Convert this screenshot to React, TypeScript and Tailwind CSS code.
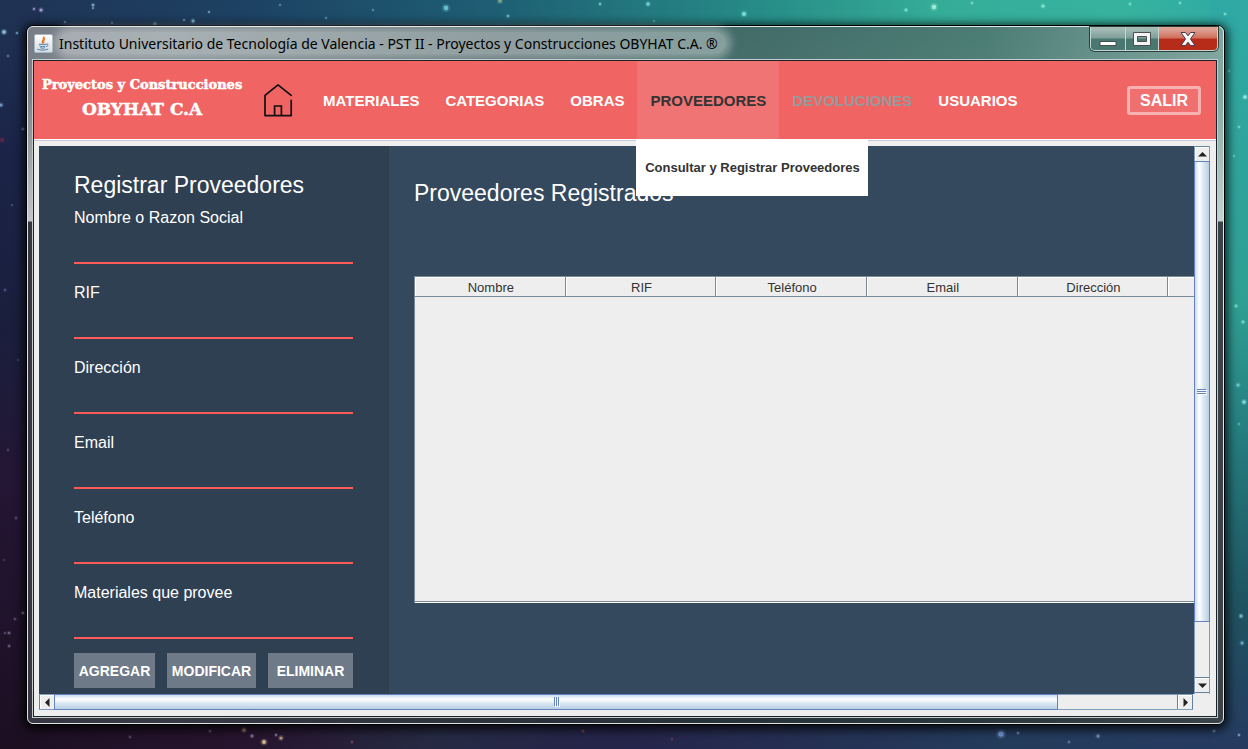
import type { ReactNode } from "react";

const NAV = [
  { label: "MATERIALES", state: "normal" },
  { label: "CATEGORIAS", state: "normal" },
  { label: "OBRAS", state: "normal" },
  { label: "PROVEEDORES", state: "active" },
  { label: "DEVOLUCIONES", state: "disabled" },
  { label: "USUARIOS", state: "normal" },
];

const FIELDS = [
  { id: "nombre", label: "Nombre o Razon Social" },
  { id: "rif", label: "RIF" },
  { id: "direccion", label: "Dirección" },
  { id: "email", label: "Email" },
  { id: "telefono", label: "Teléfono" },
  { id: "materiales", label: "Materiales que provee" },
];

const COLUMNS = ["Nombre", "RIF", "Teléfono", "Email", "Dirección", ""];

const STARS: [number, number, number, string][] = [
  [4, 32, 1.8, "#9fd6f5"], [17, 33, 1.1, "#7db2d8"], [34, 9, 1.2, "#8f8fc4"], [41, 10, 1.5, "#b6a6e0"],
  [93, 5, 1.3, "#8ab0c8"], [93, 8, 1, "#7fa0bb"], [65, 22, 1, "#6d93b0"], [112, 23, 1, "#5f88a5"],
  [155, 24, 1.5, "#6fa9bd"], [193, 21, 1.5, "#8ed0ea"], [184, 20, 1, "#6ea6bd"], [209, 12, 1, "#7bb0c8"],
  [280, 5, 1, "#5d93a8"], [326, 18, 1, "#62a0ae"], [373, 10, 1, "#5c9fae"], [446, 8, 2.4, "#6cc9d2"],
  [500, 1, 1.8, "#8fae88"], [508, 16, 1.3, "#6fc3cc"], [600, 4, 1.2, "#6fd0cf"], [648, 4, 1.6, "#7fe6e2"],
  [744, 14, 1.9, "#83f0e6"], [654, 21, 1, "#5fbfb6"], [906, 10, 1.4, "#7fe8d2"], [934, 7, 2.2, "#a8f4e0"],
  [972, 3, 1.2, "#7fdcc6"], [1043, 6, 1.5, "#8cf0d8"], [1130, 4, 1.2, "#7fe0cb"], [1180, 3, 1.2, "#7fe0cb"],
  [1225, 14, 1.2, "#7fe0cb"], [1229, 71, 1.2, "#6fd8c4"], [1245, 97, 1.7, "#9ff2ea"], [1239, 127, 1.2, "#6fd8c4"],
  [1234, 156, 1.1, "#6fd8c4"], [1236, 306, 1.4, "#7fdccf"], [1243, 322, 1.4, "#7fdccf"], [1238, 385, 1.6, "#79cfd4"],
  [1244, 402, 1.7, "#8fe6ee"], [1239, 424, 1.1, "#60b8bc"], [1241, 616, 1.5, "#7cc7da"], [1242, 643, 1.5, "#6fb4c9"],
  [1239, 735, 1.2, "#7b9bc0"], [1214, 731, 1.2, "#6f90b8"], [1098, 736, 1.5, "#7d9dd2"], [1001, 734, 2.8, "#7ba0e0"],
  [1018, 733, 1.2, "#6f86b8"], [1069, 742, 1.2, "#6279a8"], [583, 731, 1.3, "#6d4f58"], [672, 739, 1.2, "#5b3a55"],
  [264, 742, 2, "#e6c79a"], [281, 738, 1.6, "#cfa983"], [244, 730, 1.7, "#a88a6c"], [252, 736, 1.4, "#7f80a8"],
  [276, 735, 1.2, "#7f80a8"], [210, 731, 1.3, "#5d5572"], [130, 737, 1.2, "#51486a"], [352, 742, 1.2, "#7a4256"],
  [9, 633, 1.3, "#6f6485"], [15, 619, 1.2, "#595070"], [5, 633, 1.1, "#595070"], [9, 646, 1.2, "#6c6280"],
  [23, 613, 1.3, "#7b7892"], [8, 56, 1.2, "#50709a"], [1, 105, 1.5, "#7fa5d0"], [23, 129, 1.3, "#5f78a0"],
  [2, 140, 2, "#5d2945"], [12, 205, 1, "#46577f"], [5, 290, 1.2, "#4a5688"], [18, 360, 1, "#48436a"],
  [8, 450, 1.2, "#4d4066"], [16, 518, 1.3, "#5f4770"], [4, 560, 1.1, "#4d3c5c"],
];

function Backdrop() {
  return (
    <svg
      className="absolute inset-0 size-full"
      viewBox="0 0 1248 749"
      preserveAspectRatio="none"
      aria-hidden="true"
    >
      <defs>
        <linearGradient id="top" x1="0" x2="1" y1="0" y2="0">
          <stop offset="0" stopColor="#1f3355" />
          <stop offset="0.2" stopColor="#1d4263" />
          <stop offset="0.4" stopColor="#1e5f74" />
          <stop offset="0.6" stopColor="#268a86" />
          <stop offset="0.75" stopColor="#35ac98" />
          <stop offset="0.9" stopColor="#36b39f" />
          <stop offset="1" stopColor="#2fa9a4" />
        </linearGradient>
        <linearGradient id="bottom" x1="0" x2="1" y1="0" y2="0">
          <stop offset="0" stopColor="#1c0f22" />
          <stop offset="0.2" stopColor="#27142e" />
          <stop offset="0.35" stopColor="#252a43" />
          <stop offset="0.5" stopColor="#25244a" />
          <stop offset="0.8" stopColor="#243c5c" />
          <stop offset="1" stopColor="#263a60" />
        </linearGradient>
        <linearGradient id="left" x1="0" x2="0" y1="0" y2="1">
          <stop offset="0" stopColor="#1f3355" />
          <stop offset="0.2" stopColor="#1b2448" />
          <stop offset="0.45" stopColor="#1a1e3c" />
          <stop offset="0.65" stopColor="#241634" />
          <stop offset="1" stopColor="#1c0f22" />
        </linearGradient>
        <linearGradient id="right" x1="0" x2="0" y1="0" y2="1">
          <stop offset="0" stopColor="#2fa9a4" />
          <stop offset="0.4" stopColor="#2f9f93" />
          <stop offset="0.6" stopColor="#24797c" />
          <stop offset="0.8" stopColor="#1f5460" />
          <stop offset="1" stopColor="#263a60" />
        </linearGradient>
      </defs>
      <rect width="1248" height="400" fill="url(#top)" />
      <rect y="400" width="1248" height="349" fill="url(#bottom)" />
      <rect width="40" height="749" fill="url(#left)" />
      <rect x="1210" width="38" height="749" fill="url(#right)" />
      {STARS.map(([x, y, r, fill]) => (
        <g key={`${x}-${y}`} fill={fill}>
          <circle cx={x} cy={y} r={r * 1.8} opacity="0.22" />
          <circle cx={x} cy={y} r={r} opacity="0.85" />
        </g>
      ))}
    </svg>
  );
}

function JavaIcon() {
  return (
    <svg className="size-[19px] shrink-0" viewBox="0 0 19 19" aria-hidden="true">
      <defs>
        <linearGradient id="tile" x1="0" x2="0" y1="0" y2="1">
          <stop offset="0" stopColor="#ffffff" />
          <stop offset="1" stopColor="#d3dbe2" />
        </linearGradient>
      </defs>
      <rect x="0.5" y="0.5" width="18" height="18" rx="1.5" fill="url(#tile)" stroke="#a9b5bf" />
      <path d="M9.2 9.400c-3-2.300 1.600-3.400.2-6.600 3.200 2.600-1.600 4 .8 6" fill="none" stroke="#e8792b" strokeWidth="1.300" />
      <path d="M4.800 10.300h7.400M5.400 12c1.500.7 4.500.7 6 0M6.200 13.700c1.500.6 3.500.6 4.800 0M12.200 10.100c2.600-.5 2.400 2.200-.2 2.500M3.400 15.200c2.500 1.300 8.500 1.200 10.800-.2" fill="none" stroke="#4f7fa6" strokeWidth="1" />
    </svg>
  );
}

function HomeIcon() {
  return (
    <svg className="h-[34px] w-[30px]" viewBox="0 0 30 34" fill="none" stroke="#111" strokeWidth="1.7" aria-hidden="true">
      <path d="M28.200 12.300 15 1.900 2 12.300V32.600H28.200V17.300" strokeLinejoin="round" strokeLinecap="round" />
      <path d="M11.600 32.600V23H18.400V32.600" />
    </svg>
  );
}

function WindowControls() {
  return (
    <div className="mr-[5px] flex h-6 overflow-hidden rounded-b-[5px] border border-t-0 border-[#c3d6d1] shadow-[0_0_0_1px_#2b3f3d]">
      <button type="button" aria-label="Minimizar" className="flex w-[35px] items-center justify-center border-r border-[#c3d6d1] bg-linear-to-b from-[#a3bab5] from-10% via-[#7f9f99] via-48% to-[#4a7770] to-52%">
        <svg width="18" height="16" viewBox="0 0 18 16" aria-hidden="true">
          <rect x="1" y="10.500" width="16" height="4" fill="#fff" stroke="#46504f" />
        </svg>
      </button>
      <button type="button" aria-label="Maximizar" className="flex w-[33px] items-center justify-center border-r border-[#c3d6d1] bg-linear-to-b from-[#a3bab5] from-10% via-[#7f9f99] via-48% to-[#4a7770] to-52%">
        <svg width="18" height="16" viewBox="0 0 18 16" aria-hidden="true">
          <path d="M.5 1.500h17v13H.5zM4.500 5.500v5h9v-5z" fill="#f4f4f4" fillRule="evenodd" stroke="#46504f" />
        </svg>
      </button>
      <button type="button" aria-label="Cerrar" className="flex w-[58px] items-center justify-center bg-linear-to-b from-[#dda294] from-10% via-[#cf6e5c] via-48% to-[#b62c18] to-52%">
        <svg width="16" height="14" viewBox="0 0 16 14" aria-hidden="true">
          <path d="M1 .5h4.500L8 3.800 10.500.5H15L10.500 7 15 13.500h-4.500L8 10.200 5.500 13.500H1L5.500 7z" fill="#f6f6f6" stroke="#4a3a4a" />
        </svg>
      </button>
    </div>
  );
}

function Arrow({ d }: { d: string }) {
  return (
    <svg width="9" height="9" viewBox="0 0 9 9" aria-hidden="true">
      <path d={d} fill="#222" />
    </svg>
  );
}

function ArrowButton({ label, className, children }: { label: string; className: string; children: ReactNode }) {
  return (
    <button
      type="button"
      aria-label={label}
      className={`flex shrink-0 items-center justify-center border-[#6382a0] bg-[#eeeeee] shadow-[inset_1px_1px_0_#fff] ${className}`}
    >
      {children}
    </button>
  );
}

export default function App() {
  return (
    <div className="relative flex h-screen min-h-[600px] bg-[#1b2a45] pt-[25px] pr-[23px] pb-6 pl-[26px] font-['Liberation_Sans',Arial,sans-serif]">
      <Backdrop />
      <div className="relative flex min-w-0 flex-1 flex-col rounded-[7px] border border-black shadow-[0_2px_10px_3px_rgba(0,0,0,0.75)]">
        <div className="flex min-h-0 flex-1 flex-col rounded-[6px] border border-[#dfe4e4] bg-[linear-gradient(180deg,rgba(130,145,150,0)_0,rgba(225,228,232,0.05)_70px,rgba(225,228,232,0.7)_194px,rgba(28,26,38,0.7)_195px),linear-gradient(90deg,#777d86_0,#77858a_12%,#53696c_40%,#426b68_60%,#4b7c74_80%,#7fa69f_100%)] pr-[5px] pl-1">
          <header className="-mr-[5px] -ml-1 flex h-8 shrink-0 items-start justify-between pl-[6px]">
            <div className="flex h-8 items-center gap-[6px]">
              <JavaIcon />
              <h1 className="rounded-full bg-white/35 pt-0.5 pr-2 text-[14px] leading-5 whitespace-nowrap text-black shadow-[0_0_8px_5px_rgba(255,255,255,0.35)] font-['Noto_Sans',sans-serif]">
                Instituto Universitario de Tecnología de Valencia - PST II - Proyectos y Construcciones OBYHAT C.A. ®
              </h1>
            </div>
            <WindowControls />
          </header>

          <div className="mb-[5px] flex min-h-0 flex-1 flex-col border border-[#c4cccc]">
            <div className="flex min-h-0 flex-1 flex-col border border-[#1c2328] bg-[#eeeeee]">
              <nav className="flex h-[78px] shrink-0 items-stretch bg-[#f06464] text-[15px] font-bold text-white">
                <div className="flex w-[229px] shrink-0 items-start pt-4 pl-2">
                  <div className="text-center font-['DejaVu_Serif',serif] whitespace-nowrap [-webkit-text-stroke:0.5px_white]">
                    <p className="text-[13px] leading-4">Proyectos y Construcciones</p>
                    <p className="mt-1 text-[17px] leading-6">OBYHAT C.A</p>
                  </div>
                </div>
                <a href="#inicio" aria-label="Inicio" className="flex items-center">
                  <HomeIcon />
                </a>
                <div className="ml-[17px] flex">
                  {NAV.map((item) => (
                    <div key={item.label} className="relative flex">
                      <a
                        href={`#${item.label.toLowerCase()}`}
                        aria-disabled={item.state === "disabled"}
                        className={
                          item.state === "active"
                            ? "flex items-center bg-[#f07474] px-[13px] pt-0.5 text-[#333333]"
                            : item.state === "disabled"
                              ? "flex items-center px-[13px] pt-0.5 text-[#999999]"
                              : "flex items-center px-[13px] pt-0.5"
                        }
                      >
                        {item.label}
                      </a>
                      {item.state === "active" && (
                        <a
                          href="#consultar-proveedores"
                          className="absolute top-full -left-px z-10 flex h-[57px] w-[232px] items-center justify-center bg-white text-[13px] whitespace-nowrap text-[#333333]"
                        >
                          Consultar y Registrar Proveedores
                        </a>
                      )}
                    </div>
                  ))}
                </div>
                <button type="button" className="mr-[15px] ml-auto h-[29px] w-[74px] self-center rounded-[3px] border-[3px] border-[#f7b1b1] bg-[#f07070] pt-0.5 text-[16px] leading-5">
                  SALIR
                </button>
              </nav>

              <div className="flex min-h-0 flex-1 flex-col border-t border-white">
                <div className="flex min-h-0 flex-1 flex-col border-t border-[#c8c8d8] pt-[5px] pr-1.5 pb-[6px] pl-[5px]">
                  <div className="flex min-h-0 flex-1">
                    <aside className="w-[350px] shrink-0 overflow-hidden bg-[#2f4053] pr-9 pl-[35px] text-white">
                      <form>
                        <h2 className="pt-[25px] text-[23px] leading-7">Registrar Proveedores</h2>
                        <div className="pt-[9px]">
                          {FIELDS.map((field) => (
                            <div key={field.id} className="flex h-[75px] flex-col">
                              <label htmlFor={field.id} className="text-[16px] leading-5">
                                {field.label}
                              </label>
                              <input
                                id={field.id}
                                type="text"
                                className="h-9 w-full border-b-2 border-[#ff5a5a] bg-transparent text-[16px] text-white outline-none"
                              />
                            </div>
                          ))}
                        </div>
                        <div className="-mt-[5px] flex justify-between text-[14px] font-bold">
                          <button type="button" className="h-[35px] w-[81px] bg-[#6f7a88] pt-0.5">AGREGAR</button>
                          <button type="button" className="h-[35px] w-[89px] bg-[#6f7a88] pt-0.5">MODIFICAR</button>
                          <button type="button" className="h-[35px] w-[85px] bg-[#6f7a88] pt-0.5">ELIMINAR</button>
                        </div>
                      </form>
                    </aside>
                    <main className="min-w-0 flex-1 overflow-hidden bg-[#34495e] pl-[25px]">
                      <h2 className="pt-[33px] text-[23px] leading-7 text-white">Proveedores Registrados</h2>
                      <div className="mt-[69px] h-[327px] w-[906px] border border-b-0 border-[#7a8a99] bg-[#eeeeee] shadow-[inset_0_-1px_0_#fff,inset_0_-2px_0_#7a8a99]">
                        <table className="w-full table-fixed border-separate border-spacing-0 text-[13px] text-[#333333]">
                          <thead>
                            <tr>
                              {COLUMNS.map((column, index) => (
                                <th
                                  key={index}
                                  scope="col"
                                  className="border-r border-b border-[#7a8a99] p-0 pt-0.5 pl-0.5 text-center leading-[17px] font-normal shadow-[inset_1px_1px_0_#fff]"
                                >
                                  {column}
                                </th>
                              ))}
                            </tr>
                          </thead>
                          <tbody />
                        </table>
                      </div>
                    </main>
                    <div className="flex w-4 shrink-0 flex-col border-r border-l border-[#7f9dbd] bg-[#eeeeee]">
                      <ArrowButton label="Subir" className="h-[15px] border-t">
                        <Arrow d="M0 6.500 4.500 2 9 6.500z" />
                      </ArrowButton>
                      <div className="flex min-h-0 flex-1 flex-col">
                        <div className="-mx-px flex h-[461px] items-center justify-center border border-[#6382bf] bg-[linear-gradient(90deg,#c8dbec_0,#fff_30%,#dbe8f3_60%,#b8cfe5_100%)]">
                          <svg width="10" height="7" viewBox="0 0 10 7" aria-hidden="true">
                            <path d="M1 2.500h9M1 4.500h9M1 6.500h9" stroke="#fff" />
                            <path d="M0 1.500h9M0 3.500h9M0 5.500h9" stroke="#6382bf" />
                          </svg>
                        </div>
                      </div>
                      <ArrowButton label="Bajar" className="mb-px h-4 border-t border-b">
                        <Arrow d="M0 2.500h9L4.500 7z" />
                      </ArrowButton>
                    </div>
                  </div>
                  <div className="mr-[17px] flex h-4 shrink-0 border-t border-b border-[#7f9dbd] bg-[#eeeeee]">
                    <ArrowButton label="Izquierda" className="w-[15px] border-l">
                      <Arrow d="M6.500 0v9L2 4.500z" />
                    </ArrowButton>
                    <div className="flex min-w-0 flex-1">
                      <div className="-my-px flex w-[1004px] items-center justify-center border border-[#6382bf] bg-[linear-gradient(180deg,#c8dbec_0,#fff_30%,#dbe8f3_60%,#b8cfe5_100%)]">
                        <svg width="7" height="10" viewBox="0 0 7 10" aria-hidden="true">
                          <path d="M2.500 1v9M4.500 1v9M6.500 1v9" stroke="#fff" />
                          <path d="M1.500 0v9M3.500 0v9M5.500 0v9" stroke="#6382bf" />
                        </svg>
                      </div>
                    </div>
                    <ArrowButton label="Derecha" className="w-4 border-r border-l">
                      <Arrow d="M2.500 0 7 4.500 2.500 9z" />
                    </ArrowButton>
                  </div>
                </div>
              </div>
            </div>
          </div>
        </div>
      </div>
    </div>
  );
}
